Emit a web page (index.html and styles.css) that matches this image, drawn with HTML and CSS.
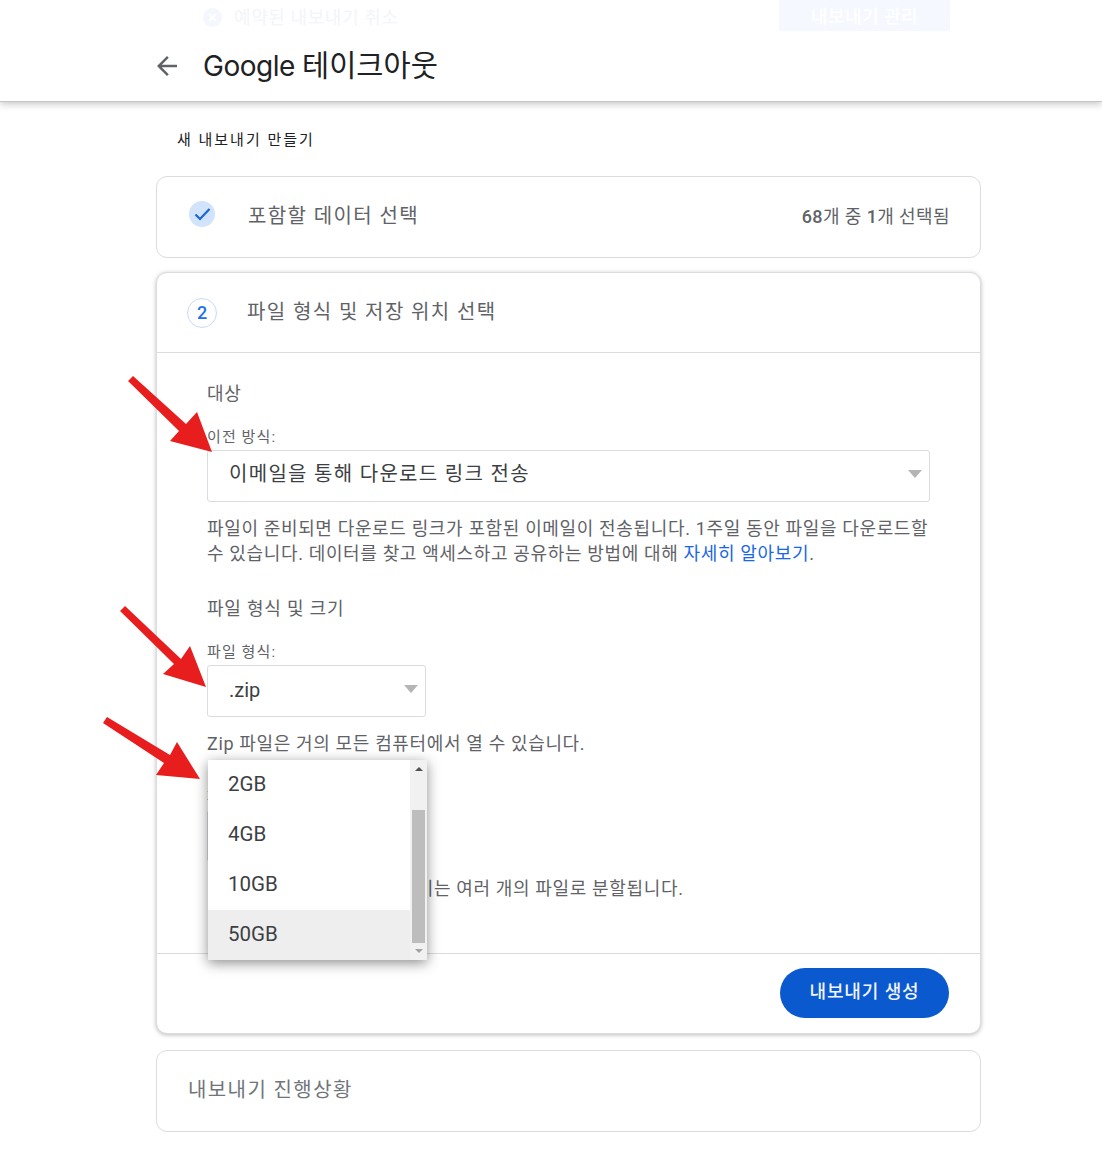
FILE: index.html
```html
<!DOCTYPE html>
<html lang="ko">
<head>
<meta charset="utf-8">
<title>Google 테이크아웃</title>
<link rel="stylesheet" href="styles.css">
</head>
<body>
<header class="header">
  <div class="strip">
    <div class="cancel">
      <svg class="cancel-icon" viewBox="0 0 20 20"><circle cx="10" cy="10" r="10" fill="#f4f8fe"/><path d="M6.500 6.500l7 7M13.500 6.500l-7 7" stroke="#fff" stroke-width="2"/></svg>
      <span>예약된 내보내기 취소</span>
    </div>
    <div class="manage">내보내기 관리</div>
  </div>
  <div class="title-row">
    <svg class="back" viewBox="0 0 24 24"><path d="M20 11H7.800l5.600-5.600L12 4l-8 8 8 8 1.400-1.400L7.800 13H20z" fill="#5f6368"/></svg>
    <h1 class="title"><span class="google">Google</span> 테이크아웃</h1>
  </div>
</header>

<main class="main">
  <p class="crumb">새 내보내기 만들기</p>

  <section class="card step-one">
    <svg class="check" viewBox="0 0 26 26"><circle cx="13" cy="13" r="13" fill="#d2e3fc"/><path d="M6.500 13.500l4.500 4.500L20.500 8" fill="none" stroke="#1a66d6" stroke-width="2.200"/></svg>
    <h2 class="step-title">포함할 데이터 선택</h2>
    <span class="count"><b>68</b>개 중 <b>1</b>개 선택됨</span>
  </section>

  <section class="card step-two">
    <div class="step-head">
      <span class="num">2</span>
      <h2 class="step-title">파일 형식 및 저장 위치 선택</h2>
    </div>
    <div class="step-body">
      <h3 class="group first">대상</h3>
      <label class="field-label">이전 방식:</label>
      <div class="select wide">이메일을 통해 다운로드 링크 전송<i class="caret"></i></div>
      <p class="help">파일이 준비되면 다운로드 링크가 포함된 이메일이 전송됩니다. 1주일 동안 파일을 다운로드할 수 있습니다. 데이터를 찾고 액세스하고 공유하는 방법에 대해 <a class="link" href="#">자세히 알아보기</a>.</p>
      <h3 class="group">파일 형식 및 크기</h3>
      <label class="field-label">파일 형식:</label>
      <div class="select narrow">.zip<i class="caret"></i></div>
      <p class="help">Zip 파일은 거의 모든 컴퓨터에서 열 수 있습니다.</p>
      <label class="field-label size-label">파일 크기:</label>
      <div class="select narrow">50GB<i class="caret"></i></div>
      <p class="help">이 파일 크기보다 큰 내보내기는 여러 개의 파일로 분할됩니다.</p>
    </div>
    <div class="step-foot">
      <button class="create">내보내기 생성</button>
    </div>
  </section>

  <section class="card step-three">
    <h2 class="step-title muted">내보내기 진행상황</h2>
  </section>
</main>

<div class="menu">
  <ul class="options">
    <li>2GB</li>
    <li>4GB</li>
    <li>10GB</li>
    <li class="active">50GB</li>
  </ul>
  <div class="scrollbar">
    <i class="sb-up"></i>
    <div class="thumb"></div>
    <i class="sb-down"></i>
  </div>
</div>

<svg class="arrows" viewBox="0 0 1102 1158">
  <path d="M133 376L186 424L197 412L212 452L170 441L179 431L128 381Z"/>
  <path d="M125 606L181 659L190 646L206 687L163 674L174 664L120 611Z"/>
  <path d="M107 717L170 755L177 742L200 779L156 775L164 763L103 723Z"/>
</svg>
</body>
</html>
```
FILE: styles.css
```css
* { box-sizing: border-box; }
html, body { margin: 0; padding: 0; }
body {
  width: 1102px;
  height: 1158px;
  overflow: hidden;
  position: relative;
  background: #fff;
  color: #3c4043;
  font-family: Roboto, "Noto Sans CJK KR", sans-serif;
}
.header {
  height: 102px;
  background: #fff;
  border-bottom: 1px solid #c4c6c8;
  box-shadow: 0 2px 7px rgba(60, 64, 67, .3);
  padding-left: 156px;
  padding-right: 152px;
}
.strip {
  height: 31px;
  display: flex;
  justify-content: space-between;
  align-items: flex-end;
}
.cancel {
  display: flex;
  align-items: center;
  gap: 12px;
  margin-left: 47px;
  height: 31px;
  color: #f2f5f9;
  font-size: 18px;
  letter-spacing: .6px;
}
.cancel-icon { width: 19px; height: 19px; margin-top: 3px; }
.manage {
  width: 171px;
  height: 31px;
  background: #f5f9ff;
  color: #fff;
  font-size: 18px;
  letter-spacing: .5px;
  font-weight: 500;
  text-align: center;
  line-height: 34px;
}
.title-row {
  height: 69px;
  display: flex;
  align-items: center;
}
.back { width: 30px; height: 30px; margin-left: -4px; margin-right: 21px; }
.title {
  margin: 0;
  font-size: 29.500px;
  font-weight: 400;
  color: #202124;
  line-height: 36px;
}
.google { font-family: Inter, Roboto, sans-serif; font-size: 28px; letter-spacing: -.5px; }
.main { width: 825px; margin-left: 156px; }
.crumb {
  margin: 0;
  height: 74px;
  padding: 28px 0 0 21px;
  font-size: 15px;
  line-height: 20px;
  letter-spacing: 2px;
  color: #202124;
}
.card {
  background: #fff;
  border: 1px solid #dadce0;
  border-radius: 11px;
}
.step-one {
  height: 82px;
  display: flex;
  align-items: center;
  padding: 0 30px 2px 32px;
}
.check { width: 26px; height: 26px; margin-right: 33px; margin-bottom: 4px; }
.step-title {
  margin: 0;
  font-size: 20px;
  font-weight: 400;
  letter-spacing: 1.4px;
  color: #5f6368;
  line-height: 28px;
}
.step-one .step-title { flex: 1; }
.count { font-size: 18px; letter-spacing: .4px; color: #5f6368; margin-bottom: 2px; }
.count b { font-weight: 500; }
.step-two {
  height: 762px;
  margin-top: 14px;
  box-shadow: 0 1px 4px rgba(60, 64, 67, .35);
  display: flex;
  flex-direction: column;
}
.step-head {
  height: 80px;
  flex: none;
  display: flex;
  align-items: center;
  border-bottom: 1px solid #dadce0;
  padding: 0 0 0 30px;
}
.num {
  width: 30px;
  height: 30px;
  border: 1px solid #c6dafc;
  border-radius: 50%;
  margin-right: 30px;
  display: flex;
  align-items: center;
  justify-content: center;
  color: #1a73e8;
  font-size: 18px;
  font-weight: 500;
}
.step-head .step-title { margin-bottom: 2px; }
.step-body { flex: 1; padding: 0 50px; }
.group {
  margin: 29px 0 0;
  font-size: 18px;
  letter-spacing: .8px;
  font-weight: 400;
  color: #5f6368;
  line-height: 28px;
}
.group.first { margin-top: 27px; }
.field-label {
  display: block;
  margin-top: 19px;
  height: 28px;
  font-size: 15px;
  letter-spacing: 1.1px;
  color: #5f6368;
  line-height: 20px;
}
.size-label { margin-top: 31px; }
.select {
  position: relative;
  height: 52px;
  border: 1px solid #dadce0;
  border-radius: 3px;
  padding-left: 21px;
  margin-top: -5px;
  color: #3c4043;
  font-size: 20px;
  line-height: 46px;
  letter-spacing: 1.3px;
}
.wide { width: 723px; }
.narrow { width: 219px; letter-spacing: 0; line-height: 48px; }
.caret {
  position: absolute;
  top: 19px;
  right: 7px;
  width: 0;
  height: 0;
  border-left: 7px solid transparent;
  border-right: 7px solid transparent;
  border-top: 8px solid #b5b5b5;
}
.help {
  margin: 14px 0 0;
  width: 723px;
  font-size: 18px;
  line-height: 25px;
  color: #5f6368;
  letter-spacing: .65px;
}
.link { color: #1a66e8; text-decoration: none; }
.step-foot {
  height: 80px;
  flex: none;
  border-top: 1px solid #dadce0;
  display: flex;
  justify-content: flex-end;
  align-items: flex-start;
  padding: 14px 31px 0 0;
}
.create {
  width: 169px;
  height: 50px;
  border: 0;
  border-radius: 25px;
  background: #0b59cf;
  color: #f1f5fb;
  font: 500 18px Roboto, "Noto Sans CJK KR", sans-serif;
  letter-spacing: .9px;
  padding-bottom: 8px;
}
.step-three {
  height: 82px;
  margin-top: 16px;
  padding: 25px 0 0 31px;
}
.muted { color: #70757a; }
.menu {
  position: absolute;
  left: 208px;
  top: 760px;
  width: 219px;
  height: 200px;
  background: #fff;
  display: flex;
  box-shadow: 0 3px 12px rgba(0, 0, 0, .45);
}
.options { list-style: none; margin: 0; padding: 0; width: 202px; }
.options li {
  height: 50px;
  padding-left: 20px;
  font-size: 20.500px;
  line-height: 49px;
  color: #3c4043;
}
.options .active { background: #eee; }
.scrollbar {
  position: relative;
  flex: 1;
  background: #f1f1f1;
}
.thumb {
  position: absolute;
  top: 50px;
  left: 2px;
  right: 2px;
  height: 133px;
  background: #bdbdbd;
}
.sb-up, .sb-down {
  position: absolute;
  left: 5px;
  width: 0;
  height: 0;
  border-left: 4px solid transparent;
  border-right: 4px solid transparent;
}
.sb-up { top: 7px; border-bottom: 4px solid #505050; }
.sb-down { bottom: 7px; border-top: 4px solid #a3a3a3; }
.arrows {
  position: absolute;
  left: 0;
  top: 0;
  width: 1102px;
  height: 1158px;
  fill: #e81e1e;
  pointer-events: none;
}
```
